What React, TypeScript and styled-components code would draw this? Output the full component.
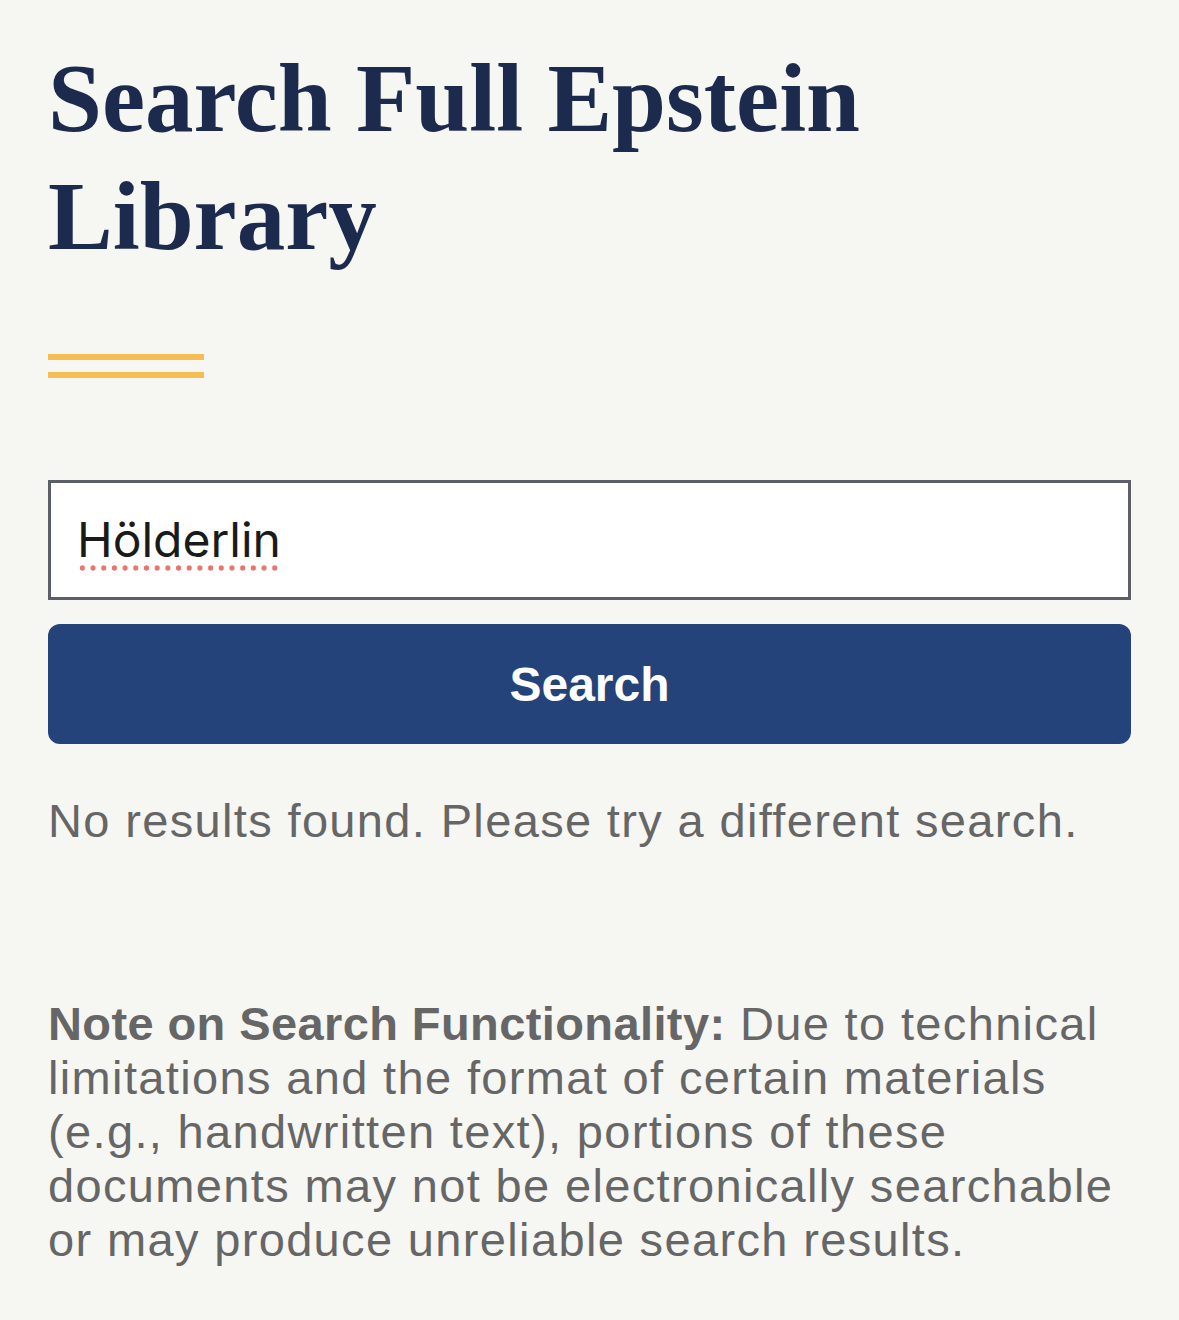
import React from "react";
import styled, { createGlobalStyle } from "styled-components";

const GlobalStyle = createGlobalStyle`
  html, body {
    margin: 0;
    padding: 0;
    background: #f6f6f3;
  }
`;

const Page = styled.main`
  box-sizing: border-box;
  width: 1179px;
  min-height: 1320px;
  padding: 40px 48px 0;
  background: #f6f6f3;
`;

const Title = styled.h1`
  margin: 0;
  font-family: "Liberation Serif", "DejaVu Serif", serif;
  font-weight: 700;
  font-size: 97px;
  line-height: 118px;
  color: #1c2b4d;
`;

const Rule = styled.div`
  display: flex;
  flex-direction: column;
  gap: 12px;
  width: 156px;
  margin: 78px 0 102px;
`;

const RuleLine = styled.span`
  display: block;
  height: 6px;
  background: #f5be55;
`;

const Form = styled.form`
  display: flex;
  flex-direction: column;
  gap: 24px;
`;

const SearchBox = styled.label`
  box-sizing: border-box;
  display: flex;
  align-items: center;
  height: 120px;
  padding: 0 26px;
  border: 3px solid #5c5f6a;
  background: #fff;
  cursor: text;
`;

const Query = styled.span`
  position: relative;
  font-family: Inter, "Noto Sans", sans-serif;
  font-size: 48px;
  line-height: 58px;
  color: #1a1a1a;

  /* spell-check squiggle */
  &::after {
    content: "";
    position: absolute;
    left: 0;
    right: 0;
    bottom: -2px;
    height: 6px;
    background: radial-gradient(circle, #e8766b 2.4px, transparent 2.9px) 0 0 / 10.7px 6px repeat-x;
  }
`;

const SearchButton = styled.button`
  height: 120px;
  border: none;
  border-radius: 12px;
  background: #25437b;
  color: #fff;
  font-family: "Liberation Sans", Arial, sans-serif;
  font-weight: 700;
  font-size: 48px;
  cursor: pointer;
`;

const BodyText = styled.p<{ $top: number }>`
  margin: ${(p) => p.$top}px 0 0;
  font-family: "Liberation Sans", Arial, sans-serif;
  font-size: 47px;
  line-height: 54px;
  letter-spacing: 1.35px;
  color: #666;

  strong {
    font-weight: 700;
    letter-spacing: 0.4px;
  }
`;

const App: React.FC = () => {
  return (
    <>
      <GlobalStyle />
      <Page>
        <Title>Search Full Epstein Library</Title>
        <Rule>
          <RuleLine />
          <RuleLine />
        </Rule>
        <Form onSubmit={(e) => e.preventDefault()}>
          <SearchBox>
            <Query>Hölderlin</Query>
          </SearchBox>
          <SearchButton type="submit">Search</SearchButton>
        </Form>
        <BodyText $top={50}>No results found. Please try a different search.</BodyText>
        <BodyText $top={149}>
          <strong>Note on Search Functionality:</strong> Due to technical
          limitations and the format of certain materials (e.g., handwritten
          text), portions of these documents may not be electronically
          searchable or may produce unreliable search results.
        </BodyText>
      </Page>
    </>
  );
};

export default App;
